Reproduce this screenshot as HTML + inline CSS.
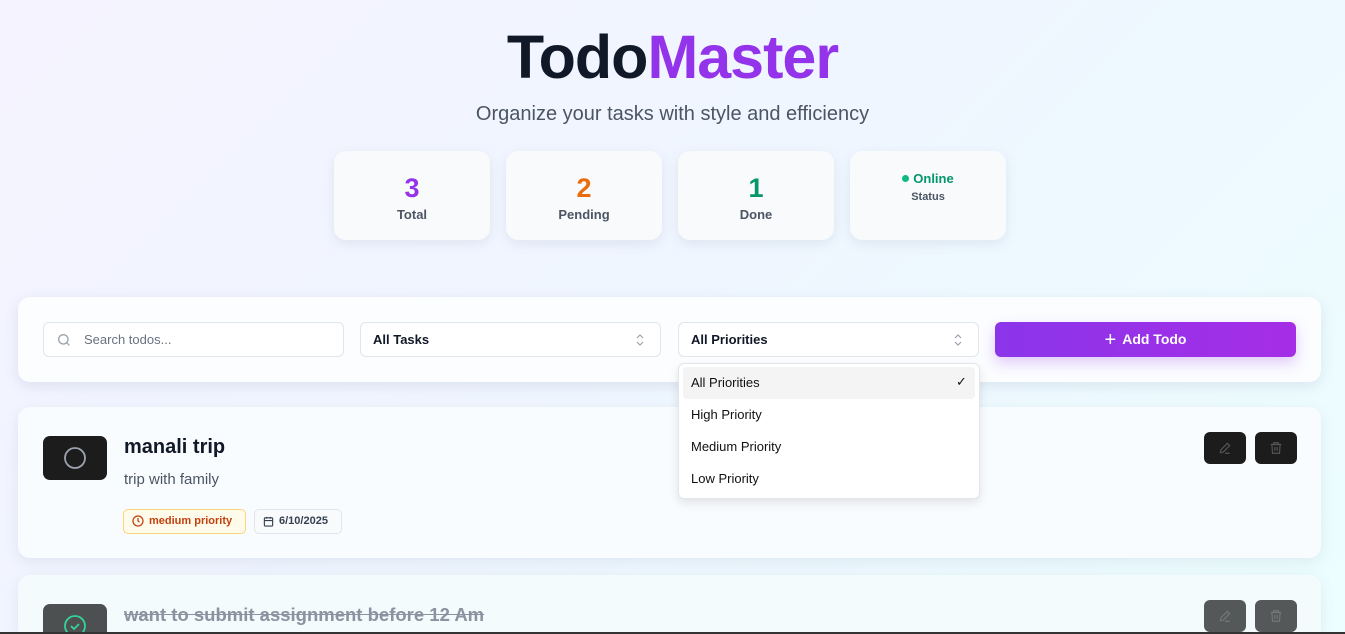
<!DOCTYPE html>
<html style="overflow:hidden;height:634px"><head><style>
*{box-sizing:border-box;margin:0;padding:0}
body{width:1345px;height:634px;overflow:hidden;font-family:"Liberation Sans",sans-serif;background:linear-gradient(135deg,#f5f3ff 0%,#eff6ff 50%,#ecfeff 100%);position:relative;color:#111827}
.abs{position:absolute}
h1{position:absolute;left:0;width:1345px;top:22px;text-align:center;font-size:61px;font-weight:bold;letter-spacing:-1px;color:#111827}
h1 span{color:#9333ea}
.sub{position:absolute;left:0;width:1345px;top:103px;text-align:center;font-size:20px;color:#4b5563}
.stat{position:absolute;top:151px;width:156px;height:89px;background:#f8fafc;border-radius:12px;box-shadow:0 4px 12px rgba(100,116,139,.12);text-align:center}
.stat b{display:block;font-size:27px;margin-top:22px;line-height:30px}
.stat i{display:block;font-style:normal;font-size:13px;color:#4b5563;font-weight:bold;margin-top:4px}
.panel{position:absolute;left:18px;top:297px;width:1303px;height:85px;background:#fbfdff;border-radius:12px;box-shadow:0 4px 14px rgba(100,116,139,.15)}
.inp{position:absolute;top:322px;height:35px;width:301px;background:#fff;border:1px solid #e2e5ea;border-radius:6px;font-size:13px;line-height:33px;padding-left:12px;font-weight:bold}
.arr{position:absolute;right:16px;top:11px;width:8px;height:12px}
.btn{position:absolute;left:995px;top:322px;width:301px;height:35px;border-radius:6px;background:linear-gradient(90deg,#8b35ea,#a52ee6);color:#fff;font-weight:bold;font-size:14px;text-align:center;line-height:35px;box-shadow:0 6px 14px rgba(147,51,234,.25)}
.card{position:absolute;left:18px;width:1303px;background:#f9fcff;border-radius:12px;box-shadow:0 4px 14px rgba(100,116,139,.12)}
.chk{position:absolute;left:43px;width:64px;height:44px;border-radius:7px;background:#1c1c1c}
.ib{position:absolute;width:42px;height:32px;border-radius:6px;background:#1c1c1c}
.dd{position:absolute;left:678px;top:363px;width:302px;height:136px;background:#fff;border:1px solid #e2e5ea;border-radius:6px;box-shadow:0 4px 10px rgba(0,0,0,.1);font-size:13px;color:#111}
.dd div{position:absolute;left:12px;height:20px}
</style></head><body>
<h1>Todo<span>Master</span></h1>
<div class="sub">Organize your tasks with style and efficiency</div>
<div class="stat" style="left:334px"><b style="color:#9333ea">3</b><i>Total</i></div>
<div class="stat" style="left:506px"><b style="color:#ea6c0a">2</b><i>Pending</i></div>
<div class="stat" style="left:678px"><b style="color:#059669">1</b><i>Done</i></div>
<div class="stat" style="left:850px"><div style="margin-top:20px;font-size:13px;font-weight:bold;color:#059669"><span style="display:inline-block;width:7px;height:7px;border-radius:50%;background:#10b981;margin-right:4px;vertical-align:1px"></span>Online</div><div style="font-size:11px;color:#4b5563;font-weight:bold;margin-top:5px">Status</div></div>

<div class="panel"></div>
<div class="inp" style="left:43px;padding-left:40px;font-weight:normal;color:#6b7280"><svg class="abs" style="left:12px;top:9px" width="16" height="16" viewBox="0 0 24 24" fill="none" stroke="#9ca3af" stroke-width="2"><circle cx="11" cy="11" r="7"/><path d="M20 20l-4-4"/></svg>Search todos...</div>
<div class="inp" style="left:360px">All Tasks<svg class="arr" viewBox="0 0 8 12" fill="none" stroke="#9ca3af" stroke-width="1.2"><path d="M1 4l3-3 3 3M1 8l3 3 3-3"/></svg></div>
<div class="inp" style="left:678px">All Priorities<svg class="arr" viewBox="0 0 8 12" fill="none" stroke="#9ca3af" stroke-width="1.2"><path d="M1 4l3-3 3 3M1 8l3 3 3-3"/></svg></div>
<div class="btn"><span style="font-size:20px;font-weight:normal;vertical-align:-2px;margin-right:6px">+</span>Add Todo</div>

<div class="card" style="top:407px;height:151px"></div>
<div class="chk" style="top:436px"><svg class="abs" style="left:20px;top:10px" width="24" height="24" viewBox="0 0 24 24" fill="none" stroke="#9ca3af" stroke-width="1.8"><circle cx="12" cy="12" r="10"/></svg></div>
<div class="abs" style="left:124px;top:436px;font-size:20px;font-weight:bold;color:#111827">manali trip</div>
<div class="abs" style="left:124px;top:471px;font-size:15px;color:#4b5563">trip with family</div>
<div class="abs" style="left:123px;top:509px;width:123px;height:25px;border:1px solid #fcd47a;background:#fffbeb;border-radius:5px;font-size:11px;font-weight:bold;color:#c2410c;line-height:23px;padding-left:25px"><svg class="abs" style="left:8px;top:5px" width="12" height="12" viewBox="0 0 24 24" fill="none" stroke="#c2410c" stroke-width="2.5"><circle cx="12" cy="12" r="10"/><path d="M12 6v6l3 2"/></svg>medium priority</div>
<div class="abs" style="left:254px;top:509px;width:88px;height:25px;border:1px solid #e2e5ea;background:#f8fafc;border-radius:5px;font-size:11px;font-weight:bold;color:#374151;line-height:23px;padding-left:24px"><svg class="abs" style="left:8px;top:6px" width="11" height="11" viewBox="0 0 24 24" fill="none" stroke="#374151" stroke-width="2.5"><rect x="3" y="4" width="18" height="18" rx="2"/><path d="M3 10h18M8 2v4M16 2v4"/></svg>6/10/2025</div>
<div class="ib" style="left:1204px;top:432px"><svg class="abs" style="left:14px;top:9px" width="14" height="14" viewBox="0 0 24 24" fill="none" stroke="#555" stroke-width="2"><path d="M4 20l1-5L16 4l4 4L9 19zM12 21h8"/></svg></div>
<div class="ib" style="left:1255px;top:432px"><svg class="abs" style="left:14px;top:9px" width="14" height="14" viewBox="0 0 24 24" fill="none" stroke="#555" stroke-width="2"><path d="M3 6h18M8 6V3h8v3M5 6l1 15h12l1-15M10 10v7M14 10v7"/></svg></div>

<div class="card" style="top:575px;height:59px;background:#f3fbfd;border-radius:12px 12px 0 0"></div>
<div class="chk" style="top:604px;height:28px;border-radius:7px 7px 0 0;background:#4d5050;overflow:hidden"><svg class="abs" style="left:20px;top:10px" width="24" height="24" viewBox="0 0 24 24" fill="none" stroke="#34d399" stroke-width="1.8"><circle cx="12" cy="12" r="10"/><path d="M8 12l3 3 5-5"/></svg></div>
<div class="abs" style="left:124px;top:604px;font-size:18.5px;font-weight:bold;color:#8a939f;text-decoration:line-through">want to submit assignment before 12 Am</div>
<div class="ib" style="left:1204px;top:600px;background:#545858"><svg class="abs" style="left:14px;top:9px" width="14" height="14" viewBox="0 0 24 24" fill="none" stroke="#777" stroke-width="2"><path d="M4 20l1-5L16 4l4 4L9 19zM12 21h8"/></svg></div>
<div class="ib" style="left:1255px;top:600px;background:#545858"><svg class="abs" style="left:14px;top:9px" width="14" height="14" viewBox="0 0 24 24" fill="none" stroke="#777" stroke-width="2"><path d="M3 6h18M8 6V3h8v3M5 6l1 15h12l1-15M10 10v7M14 10v7"/></svg></div>

<div class="dd">
<div style="left:4px;top:3px;width:292px;height:32px;background:#f4f4f5;border-radius:4px"></div>
<div style="top:11px">All Priorities</div>
<div style="left:277px;top:10px">✓</div>
<div style="top:43px">High Priority</div>
<div style="top:75px">Medium Priority</div>
<div style="top:107px">Low Priority</div>
</div>
<div class="abs" style="left:0;top:632px;width:1345px;height:2px;background:#333"></div>
</body></html>
